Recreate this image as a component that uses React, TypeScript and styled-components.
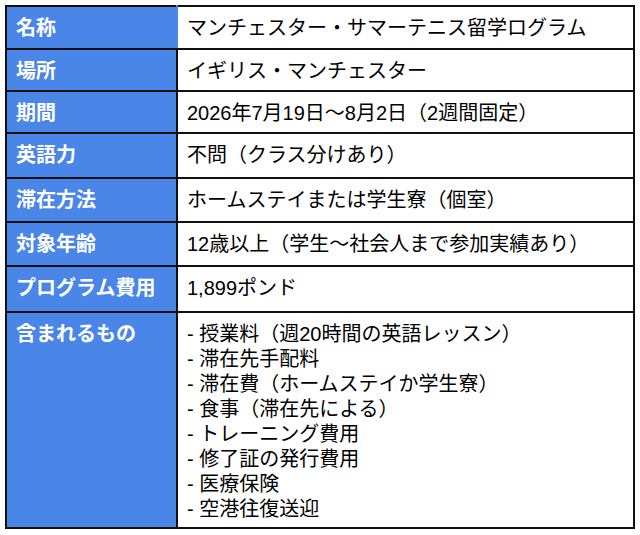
import styled, { createGlobalStyle } from 'styled-components'

type Row = {
  label: string
  value: string | string[]
  height: number
  joined?: boolean
}

const rows: Row[] = [
  { label: '名称', value: 'マンチェスター・サマーテニス留学ログラム', height: 43, joined: true },
  { label: '場所', value: 'イギリス・マンチェスター', height: 42 },
  { label: '期間', value: '2026年7月19日～8月2日（2週間固定）', height: 42 },
  { label: '英語力', value: '不問（クラス分けあり）', height: 45 },
  { label: '滞在方法', value: 'ホームステイまたは学生寮（個室）', height: 44 },
  { label: '対象年齢', value: '12歳以上（学生～社会人まで参加実績あり）', height: 44 },
  { label: 'プログラム費用', value: '1,899ポンド', height: 46 },
  {
    label: '含まれるもの',
    value: [
      '授業料（週20時間の英語レッスン）',
      '滞在先手配料',
      '滞在費（ホームステイか学生寮）',
      '食事（滞在先による）',
      'トレーニング費用',
      '修了証の発行費用',
      '医療保険',
      '空港往復送迎',
    ],
    height: 216,
  },
]

const App = () => {
  return (
    <>
      <GlobalStyle />
      <Table>
        <tbody>
          {rows.map((row) => (
            <tr key={row.label}>
              <Label $height={row.height} $joined={row.joined}>
                {row.label}
              </Label>
              <Value>
                {Array.isArray(row.value) ? (
                  <List>
                    {row.value.map((item) => (
                      <li key={item}>- {item}</li>
                    ))}
                  </List>
                ) : (
                  row.value
                )}
              </Value>
            </tr>
          ))}
        </tbody>
      </Table>
    </>
  )
}

export default App

const GlobalStyle = createGlobalStyle`
  body {
    margin: 0;
    padding: 5px;
    background: #ffffff;
    font-family: "Liberation Sans", "Noto Sans CJK JP", sans-serif;
  }
`

const Table = styled.table`
  width: 630px;
  border-collapse: collapse;
  border: 2px solid #111111;
`

const Label = styled.th<{ $height: number; $joined?: boolean }>`
  box-sizing: border-box;
  width: 171px;
  height: ${({ $height }) => $height}px;
  padding: 9px 9px 0;
  vertical-align: top;
  text-align: left;
  background: #4a86e8;
  color: #ffffff;
  font-size: 20px;
  font-weight: 700;
  line-height: 25px;
  white-space: nowrap;
  border: 2px solid #111111;
  border-right: ${({ $joined }) => ($joined ? '2px solid #4a86e8' : '2px solid #111111')};
`

const Value = styled.td`
  padding: 9px 9px 0;
  vertical-align: top;
  color: #000000;
  font-size: 20px;
  line-height: 25px;
  white-space: nowrap;
  border: 2px solid #111111;
`

const List = styled.ul`
  margin: 0;
  padding: 0;
  list-style: none;
`
